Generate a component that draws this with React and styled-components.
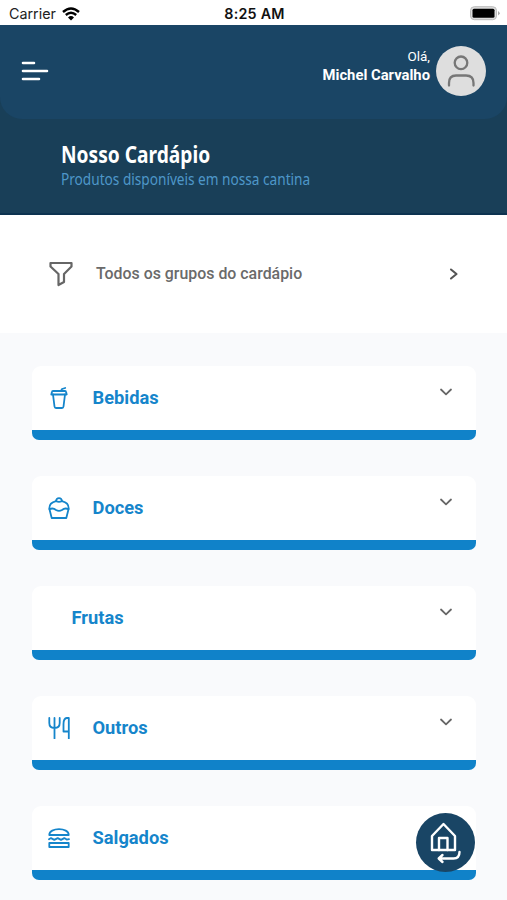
import React from 'react'
import styled, { createGlobalStyle } from 'styled-components'

const GlobalStyle = createGlobalStyle`
  * {
    box-sizing: border-box;
  }
  body {
    margin: 0;
    overflow: hidden;
    font-family: Roboto, sans-serif;
  }
`
const Container = styled.div`
  position: relative;
  height: 900px;
  overflow: hidden;
  background-color: #f9fafc;
`
const StatusBar = styled.div`
  height: 25px;
  padding: 2px 7px 0 9px;
  display: grid;
  grid-template-columns: 1fr auto 1fr;
  align-items: center;
  background-color: white;
  color: #222;
  font-family: Inter, sans-serif;
  font-size: 14.3px;
`
const Carrier = styled.div`
  display: flex;
  align-items: center;
  gap: 6px;
`
const Clock = styled.span`
  color: #111;
  font-weight: 600;
  letter-spacing: 0.22px;
`
const Battery = styled.svg`
  justify-self: end;
`
const Banner = styled.div`
  height: 190px;
  background-color: #193f58;
  border-bottom: 2px solid #0d3350;
`
const Header = styled.div`
  height: 94px;
  padding: 0 21px;
  display: flex;
  justify-content: space-between;
  align-items: center;
  background-color: #1a4565;
  border-radius: 0 0 22px 22px;
`
const User = styled.div`
  display: flex;
  align-items: center;
  gap: 6px;
  margin-bottom: 2px;
`
const UserTexts = styled.div`
  display: flex;
  flex-direction: column;
  align-items: flex-end;
  margin-bottom: 11px;
  color: white;
`
const Hello = styled.span`
  font-size: 13.5px;
  line-height: 19px;
`
const UserName = styled.span`
  font-size: 14.8px;
  line-height: 19px;
  font-weight: 700;
`
const Avatar = styled.div`
  width: 50px;
  height: 50px;
  border-radius: 50%;
  background-color: #dedede;
`
const Heading = styled.div`
  padding: 21px 61px 0;
  font-family: 'Noto Sans', sans-serif;
  white-space: nowrap;
`
const Title = styled.h1`
  margin: 0;
  width: max-content;
  color: white;
  font-size: 22.5px;
  line-height: 29px;
  font-weight: 700;
  transform: scaleX(0.852);
  transform-origin: left;
`
const Subtitle = styled.p`
  margin: 0;
  width: max-content;
  color: #4e97c9;
  font-size: 15.8px;
  line-height: 20px;
  transform: scaleX(0.863);
  transform-origin: left;
`
const Filter = styled.div`
  height: 118px;
  padding: 0 47px 0 48px;
  display: flex;
  align-items: center;
  background-color: white;
`
const FilterText = styled.span`
  flex: 1;
  margin: 0 0 1px 22px;
  color: #6a6a6a;
  font-size: 15.9px;
  font-weight: 500;
`
const List = styled.div`
  padding: 33px 31px 0 31.5px;
  display: flex;
  flex-direction: column;
  gap: 36px;
`
const Card = styled.div`
  height: 74px;
  padding: 0 21px 0 16px;
  display: flex;
  align-items: center;
  background-color: white;
  border-bottom: 10px solid #1082c9;
  border-radius: 9px 9px 7px 7px;
`
const Name = styled.span`
  flex: 1;
  margin-left: ${(props) => (props.$icon ? '23px' : '24px')};
  color: #1585cb;
  font-size: 18.3px;
  line-height: 22px;
  font-weight: 700;
`
const Icon = styled.svg`
  flex: none;
  fill: none;
  stroke: ${(props) => props.$color || '#1585cb'};
  stroke-width: ${(props) => props.$stroke || 1.8};
  stroke-linecap: round;
  stroke-linejoin: round;
`
const Chevron = styled(Icon)`
  margin-bottom: 13px;
`
const HomeButton = styled.button`
  position: absolute;
  left: 416px;
  top: 813px;
  width: 59px;
  height: 59px;
  padding: 0;
  border: none;
  border-radius: 50%;
  background-color: #194565;
`

const groups = [
  {
    name: 'Bebidas',
    icon: (
      <>
        <path d="M5 7.5 6.5 19.5q.2 1.5 1.5 1.5h6q1.3 0 1.5-1.5L17 7.5" />
        <path d="M5 4h12q1 0 1.2 1.5l.5 2H3.3l.5-2Q4 4 5 4ZM13 4l1-2 3.2-1" />
      </>
    ),
  },
  {
    name: 'Doces',
    icon: (
      <>
        <path d="M8 4.2C3.5 5.2 1.3 7.5 1.3 11.5L3.7 21h14.6l2.4-9.5C20.7 7.5 18.5 5.2 14 4.2" />
        <path d="M8 4.2C8.5.2 13.5.2 14 4.2Q11 5.5 8 4.2ZM1.5 12.2Q5 10.5 8 13q3 1.8 6 0 3-2.5 6.5-.8" />
      </>
    ),
  },
  { name: 'Frutas' },
  {
    name: 'Outros',
    icon: (
      <>
        <path d="M1.3 1v5q0 5 5.2 5t5.2-5V1M6.5 1v20.5" />
        <path d="M20.8 21.5V1h-2q-3.3.3-3.3 6v7.5h5" />
      </>
    ),
  },
  {
    name: 'Salgados',
    icon: (
      <>
        <path d="M1.3 8C1 .2 21 .2 20.7 8ZM1.3 16h19.4v4H1.3Z" />
        <path d="m1 12.3 2-1.2 3.3 1.8L9.7 11.1l3.3 1.8 3.3-1.8 2.4 1.5 2.3-.5" />
      </>
    ),
  },
]

const App = () => {
  return (
    <Container>
      <GlobalStyle />
      <StatusBar>
        <Carrier>
          Carrier
          <svg width="18" height="14" viewBox="0 0 18 14">
            <g fill="none" stroke="black" strokeWidth="2.4">
              <path d="M1 5Q9-2 17 5" />
              <path d="M3.8 8Q9 3.5 14.2 8" />
            </g>
            <path d="M6 10.4Q9 7.7 12 10.4L9 13.5Z" />
          </svg>
        </Carrier>
        <Clock>8:25 AM</Clock>
        <Battery width="31" height="15" viewBox="0 0 31 15">
          <rect x="1.5" y=".7" width="26" height="13" rx="3.8" fill="#ddd" stroke="#bbb" />
          <rect x="3.5" y="2.7" width="22" height="9" rx="1.5" />
          <path d="M29 5q3.5 2.3 0 4.5Z" fill="#aaa" />
        </Battery>
      </StatusBar>
      <Banner>
        <Header>
          <Icon width="28" height="24" $color="white" $stroke={2.6}>
            <path d="M2 3h11M2 11h24M2 19h16" />
          </Icon>
          <User>
            <UserTexts>
              <Hello>Olá,</Hello>
              <UserName>Michel Carvalho</UserName>
            </UserTexts>
            <Avatar>
              <Icon width="50" height="50" $color="#777" $stroke={2.3}>
                <circle cx="25" cy="16.8" r="6.3" />
                <path d="M13 39.5V37q0-7.5 7-7.5h10q7.5 0 7.5 7.5v2.5" />
              </Icon>
            </Avatar>
          </User>
        </Header>
        <Heading>
          <Title>Nosso Cardápio</Title>
          <Subtitle>Produtos disponíveis em nossa cantina</Subtitle>
        </Heading>
      </Banner>
      <Filter>
        <Icon width="26" height="26" $color="#666" $stroke={2.2}>
          <path d="M2.5 2h21v3.5L16 13v8l-5.5 3V13L2.5 5.5Z" />
        </Icon>
        <FilterText>Todos os grupos do cardápio</FilterText>
        <Icon width="12" height="14" $color="#555" $stroke={2.1}>
          <path d="m3 2.5 5.5 4.5L3 11.5" />
        </Icon>
      </Filter>
      <List>
        {groups.map((group) => (
          <Card key={group.name}>
            {group.icon && (
              <Icon width="22" height="22" viewBox="0 0 22 22">
                {group.icon}
              </Icon>
            )}
            <Name $icon={!!group.icon}>{group.name}</Name>
            <Chevron width="18" height="12" $color="#666" $stroke={1.8}>
              <path d="m4 3.5 5 4.8 5-4.8" />
            </Chevron>
          </Card>
        ))}
      </List>
      <HomeButton>
        <Icon width="59" height="59" $color="white" $stroke={2.4}>
          <path d="M16 37V23l11.5-12L39 23v14Z" />
          <path d="M23 37V25h8.5v12M43.5 39q0 6.5-6 6.5H23M26.5 42l-3.8 3.5 3.8 3.5" />
        </Icon>
      </HomeButton>
    </Container>
  )
}

export default App
